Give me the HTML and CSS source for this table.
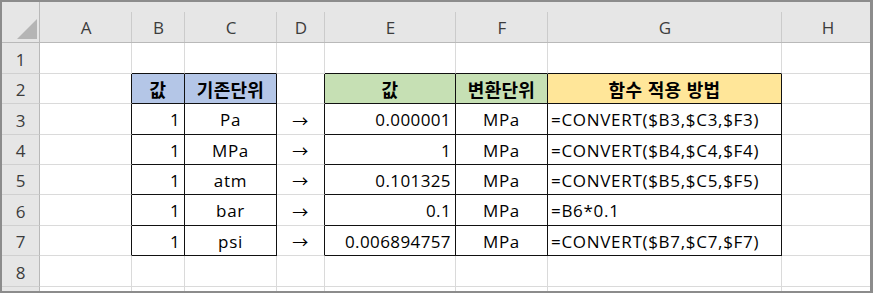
FILE: index.html
```html
<!DOCTYPE html>
<html lang="ko">
<head>
<meta charset="utf-8">
<title>CONVERT</title>
<link rel="stylesheet" href="styles.css">
</head>
<body>
<div class="frame">
  <div class="sheet">
    <div class="corner"><span class="tri"></span></div>
    <div class="ch">A</div><div class="ch">B</div><div class="ch">C</div><div class="ch">D</div><div class="ch">E</div><div class="ch">F</div><div class="ch">G</div><div class="ch">H</div>

    <div class="rh">1</div>
    <div class="c"></div><div class="c bB"></div><div class="c bB"></div><div class="c"></div><div class="c bB"></div><div class="c bB"></div><div class="c bB"></div><div class="c"></div>

    <div class="rh">2</div>
    <div class="c bR"></div>
    <div class="c bR bB hb ctr ko">값</div>
    <div class="c bR bB hb ctr ko">기존단위</div>
    <div class="c bR"></div>
    <div class="c bR bB hg ctr ko">값</div>
    <div class="c bR bB hg ctr ko">변환단위</div>
    <div class="c bR bB hy ctr ko">함수 적용 방법</div>
    <div class="c"></div>

    <div class="rh">3</div>
    <div class="c bR"></div>
    <div class="c bR bB num">1</div>
    <div class="c bR bB ctr">Pa</div>
    <div class="c bR ctr arr">→</div>
    <div class="c bR bB num">0.000001</div>
    <div class="c bR bB ctr">MPa</div>
    <div class="c bR bB lft">=CONVERT($B3,$C3,$F3)</div>
    <div class="c"></div>

    <div class="rh">4</div>
    <div class="c bR"></div>
    <div class="c bR bB num">1</div>
    <div class="c bR bB ctr">MPa</div>
    <div class="c bR ctr arr">→</div>
    <div class="c bR bB num">1</div>
    <div class="c bR bB ctr">MPa</div>
    <div class="c bR bB lft">=CONVERT($B4,$C4,$F4)</div>
    <div class="c"></div>

    <div class="rh">5</div>
    <div class="c bR"></div>
    <div class="c bR bB num">1</div>
    <div class="c bR bB ctr">atm</div>
    <div class="c bR ctr arr">→</div>
    <div class="c bR bB num">0.101325</div>
    <div class="c bR bB ctr">MPa</div>
    <div class="c bR bB lft">=CONVERT($B5,$C5,$F5)</div>
    <div class="c"></div>

    <div class="rh">6</div>
    <div class="c bR"></div>
    <div class="c bR bB num">1</div>
    <div class="c bR bB ctr">bar</div>
    <div class="c bR ctr arr">→</div>
    <div class="c bR bB num">0.1</div>
    <div class="c bR bB ctr">MPa</div>
    <div class="c bR bB lft">=B6*0.1</div>
    <div class="c"></div>

    <div class="rh">7</div>
    <div class="c bR"></div>
    <div class="c bR bB num">1</div>
    <div class="c bR bB ctr">psi</div>
    <div class="c bR ctr arr">→</div>
    <div class="c bR bB num">0.006894757</div>
    <div class="c bR bB ctr">MPa</div>
    <div class="c bR bB lft">=CONVERT($B7,$C7,$F7)</div>
    <div class="c"></div>

    <div class="rh">8</div>
    <div class="c"></div><div class="c"></div><div class="c"></div><div class="c"></div><div class="c"></div><div class="c"></div><div class="c"></div><div class="c"></div>

    <div class="rh"></div>
    <div class="c"></div><div class="c"></div><div class="c"></div><div class="c"></div><div class="c"></div><div class="c"></div><div class="c"></div><div class="c"></div>
  </div>
</div>
</body>
</html>
```

FILE: styles.css
```css
html, body {
  margin: 0;
  padding: 0;
  background: #ffffff;
}

body {
  font-family: "Open Sans", "Noto Sans CJK KR", sans-serif;
  font-size: 17px;
  letter-spacing: 0.7px;
  color: #000;
}

.frame {
  width: 873px;
  height: 293px;
  box-sizing: border-box;
  border-style: solid;
  border-color: #8c8c8c;
  border-width: 2px 3px 2px 2px;
  overflow: hidden;
}

.sheet {
  display: grid;
  grid-template-columns: 38px 92px 53px 92px 48px 131px 92px 234px 92px;
  grid-template-rows: 41px 31px 30px 31px 30px 30px 31px 30px 31px 30px;
  width: 868px;
  height: 289px;
  overflow: hidden;
}

.sheet > div {
  box-sizing: border-box;
  min-width: 0;
  white-space: nowrap;
  overflow: hidden;
}

.corner {
  background: #e6e6e6;
  border-right: 1px solid #b9b9b9;
  border-bottom: 1px solid #b9b9b9;
  display: flex;
  align-items: flex-end;
  justify-content: flex-end;
  padding: 0 2px 3px 0;
}

.tri {
  display: block;
  width: 20px;
  height: 20px;
  background: #b5b5b5;
  clip-path: polygon(100% 0, 100% 100%, 0 100%);
}

.ch {
  background:
    linear-gradient(#cbcbcb, #cbcbcb) right bottom / 1px 30px no-repeat,
    #e6e6e6;
  border-bottom: 1px solid #b9b9b9;
  color: #3c3c3c;
  display: flex;
  align-items: center;
  justify-content: center;
  padding-top: 10px;
  letter-spacing: 0;
}

.rh {
  background: #e6e6e6;
  border-right: 1px solid #b9b9b9;
  border-bottom: 1px solid #d0d0d0;
  color: #3c3c3c;
  display: flex;
  align-items: center;
  justify-content: center;
  padding-top: 2px;
  letter-spacing: 0;
}

.c {
  border-right: 1px solid #dadada;
  border-bottom: 1px solid #dadada;
  display: flex;
  align-items: center;
  padding-top: 1px;
}

.c.bR {
  border-right-color: #111;
}

.c.bB {
  border-bottom-color: #111;
}

.num {
  justify-content: flex-end;
  padding-right: 4px;
  letter-spacing: 0.4px;
}

.ctr {
  justify-content: center;
}

.lft {
  justify-content: flex-start;
  padding-left: 3px;
}

.arr {
  font-family: "Noto Sans CJK KR", sans-serif;
  font-size: 16px;
}

.ko {
  font-family: "Noto Sans CJK KR", sans-serif;
  font-weight: 700;
  font-size: 18px;
  letter-spacing: 0.3px;
  padding-top: 0;
}

.hb {
  background: #b4c6e7;
}

.hg {
  background: #c6e0b4;
}

.hy {
  background: #ffe699;
}
```
